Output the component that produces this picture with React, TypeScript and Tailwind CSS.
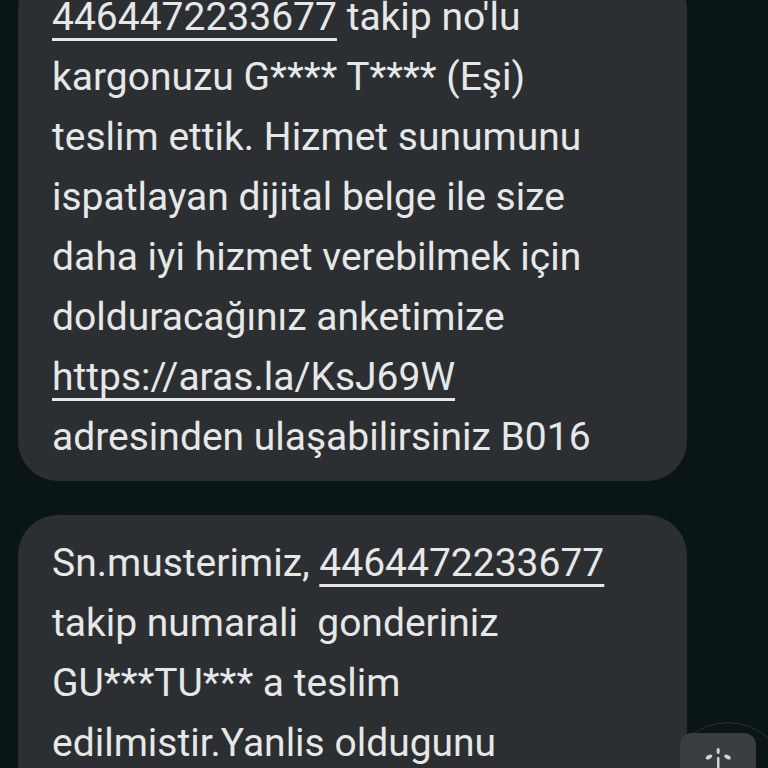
import React from "react";

const link = "underline decoration-[3px] underline-offset-[8px] [text-decoration-skip-ink:none]";

const first = [
  <><span className={link}>4464472233677</span> takip no'lu</>,
  <>kargonuzu G**** T**** (Eşi)</>,
  <>teslim ettik. Hizmet sunumunu</>,
  <>ispatlayan dijital belge ile size</>,
  <>daha iyi hizmet verebilmek için</>,
  <>dolduracağınız anketimize</>,
  <><span className={link}>https://aras.la/KsJ69W</span></>,
  <>adresinden ulaşabilirsiniz B016</>,
];

const second = [
  <>Sn.musterimiz, <span className={link}>4464472233677</span></>,
  <>takip numarali&nbsp; gonderiniz</>,
  <>GU***TU*** a teslim</>,
  <>edilmistir.Yanlis oldugunu</>,
  <>dusunuyorsaniz</>,
];

const Bubble = ({ lines, className }: { lines: React.ReactNode[]; className?: string }) => (
  <div className={`w-[669px] rounded-[40px] bg-[#2c2f31] px-[34px] ${className ?? ""}`}>
    {lines.map((l, i) => (
      <div key={i} className="whitespace-nowrap">
        {l}
      </div>
    ))}
  </div>
);

export default function App() {
  return (
    <div
      className="relative h-[768px] w-[768px] overflow-hidden bg-[#0a1515] text-[#e6e8e8]"
      style={{ fontFamily: "Roboto, 'Noto Sans', sans-serif" }}
    >
      <div className="flex flex-col gap-[34px] px-[18px] text-[39px] leading-[60px]">
        <Bubble lines={first} className="mt-[-31px] pt-[18px] pb-[14px]" />
        <Bubble lines={second} className="pt-[18px] pb-[14px]" />
      </div>

      {/* floating action button */}
      <div className="absolute left-[668px] top-[722px] h-[120px] w-[120px] rounded-full border border-[#2a3233]" />
      <div className="absolute left-[680px] top-[733px] flex h-[76px] w-[76px] items-start justify-center rounded-[12px] bg-[#3a3e41] pt-[14px]">
        <svg width="30" height="30" viewBox="0 0 30 30" fill="#cfd3d4">
          <rect x="14" y="10" width="2.5" height="20" rx="1" />
          <ellipse cx="15.2" cy="4" rx="1.6" ry="3" />
          <ellipse cx="6" cy="10" rx="3.5" ry="2" transform="rotate(-30 6 10)" />
          <ellipse cx="24.5" cy="10" rx="3.5" ry="2" transform="rotate(30 24.5 10)" />
        </svg>
      </div>
    </div>
  );
}
